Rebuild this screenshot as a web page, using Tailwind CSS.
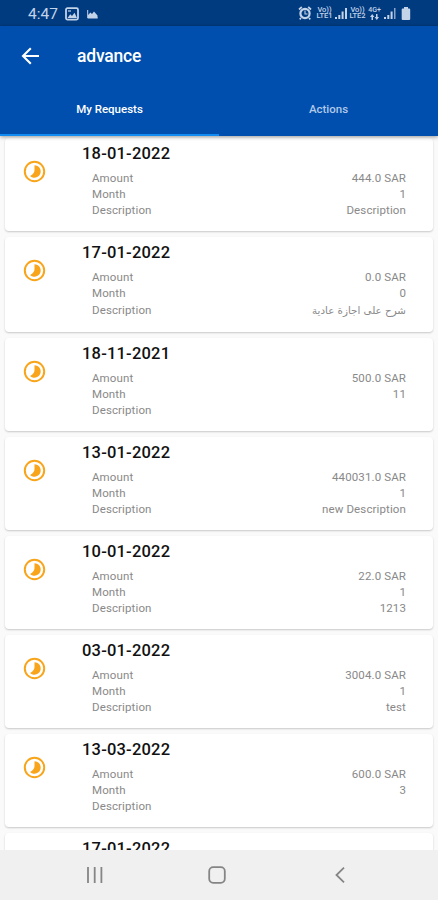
<!DOCTYPE html>
<html lang="en">
<head>
<meta charset="utf-8">
<title>advance</title>
<script src="https://cdn.jsdelivr.net/npm/@tailwindcss/browser@4"></script>
</head>
<body class="w-[438px] h-[900px] overflow-hidden bg-[#fafafa] font-[Roboto,'Noto_Sans',sans-serif] flex flex-col">
<div class="h-[26px] shrink-0 bg-[#003b80] text-[#c3d3e8] flex items-center pl-[28px] pr-[27px]">
  <span class="text-[15.5px] leading-[26px] w-[37px] pt-[2px]">4:47</span>
  <svg class="mt-px" width="14" height="14" viewBox="0 0 14 14"><rect x="1" y="1.2" width="12" height="11.4" rx="1.5" fill="none" stroke="currentColor" stroke-width="1.8"/><path d="M2.500 11 5.300 7.200 7 9 9.500 5.700 12 11z" fill="currentColor"/><path d="M3 3h3v2H3z" fill="currentColor" opacity=".6"/></svg>
  <svg class="ml-[8px] mt-px" width="11" height="10" viewBox="0 0 11 10"><path d="M.7 1v8h10" stroke="currentColor" stroke-width="1" fill="none"/><path d="M1 9V6L3.500 3.500 5 5 7 2.500 10.500 6.500V9z" fill="currentColor"/></svg>
  <div class="ml-auto flex items-center">
    <svg class="mr-[4px]" width="14" height="14" viewBox="0 0 14 14" fill="none" stroke="currentColor"><circle cx="7" cy="7.500" r="4.600" stroke-width="2.200"/><path d="M1 3.500 3.800 1M13 3.500 10.200 1M3 12l-1.300 1.300M11 12l1.300 1.300" stroke-width="1.700"/><path d="M7 4.500V8h2.500" stroke-width="1.100"/></svg>
    <span class="w-[17px] text-[7.5px] leading-[6.5px] font-medium text-center whitespace-nowrap">Vo))<br>LTE1</span>
    <svg class="ml-[2px]" width="13" height="13" viewBox="0 0 13 13" fill="currentColor"><path d="M0 10h2v2H0zM3.300 8h2v4h-2zM6.600 4.500h2V12h-2zM10 1h2v11h-2z"/></svg>
    <span class="ml-[1px] w-[17px] text-[7.5px] leading-[6.5px] font-medium text-center whitespace-nowrap">Vo))<br>LTE2</span>
    <div class="ml-[2px] w-[13px] flex flex-col items-center">
      <span class="text-[7px] leading-[7px] font-medium">4G+</span>
      <svg width="9" height="6" viewBox="0 0 9 6" fill="currentColor"><path d="M0 3 2.200 0 4.400 3H3v3H1.500V3zM4.600 3H6V0h1.500v3H9L6.800 6z"/></svg>
    </div>
    <svg class="ml-[3px]" width="13" height="13" viewBox="0 0 13 13" fill="currentColor"><path d="M0 10h2v2H0zM3.300 8h2v4h-2z"/><path d="M6.600 4.500h2V12h-2z"/><path d="M10 1h1.500v11H10z" opacity=".7"/></svg>
    <svg class="ml-[4px]" width="10" height="13" viewBox="0 0 10 13" fill="currentColor"><path d="M3 0h4v1.500h1.200q1 0 1 1V12q0 1-1 1H1.700q-1 0-1-1V2.500q0-1 1-1H3z"/></svg>
  </div>
</div>
<header class="relative z-10 h-[110px] shrink-0 bg-[#004fae] text-white shadow-[0_1px_4px_rgba(0,0,0,0.4)] flex flex-col">
  <div class="h-[60px] flex items-center pl-[21px]">
    <svg width="19" height="18" viewBox="0 0 19 18" fill="none" stroke="currentColor" stroke-width="2.100"><path d="M18 9H2M9.800 1.200 2 9l7.800 7.800"/></svg>
    <h1 class="ml-[37px] text-[17.5px] font-medium leading-[24px] tracking-[-0.2px]">advance</h1>
  </div>
  <nav class="flex-1 flex text-[11.5px] font-medium text-center">
    <div class="w-[219px] border-b-[2px] border-[#128cf0] leading-[49px]">My Requests</div>
    <div class="w-[219px] leading-[49px] text-[#b0c9e8]">Actions</div>
  </nav>
</header>
<main id="list" class="flex-1 min-h-0 overflow-hidden pt-[2px] px-[5px] flex flex-col gap-[6px]"></main>
<footer class="relative z-10 h-[50px] shrink-0 bg-[#f0f0f0] text-[#858585] flex items-center">
  <svg class="ml-[86px]" width="18" height="16" viewBox="0 0 18 16" stroke="currentColor" stroke-width="1.800"><path d="M2 0v16M8.700 0v16M15.400 0v16"/></svg>
  <svg class="ml-[104px]" width="18" height="18" viewBox="0 0 18 18" fill="none" stroke="currentColor" stroke-width="1.800"><rect x="1.200" y="1.200" width="15.600" height="15.600" rx="4"/></svg>
  <svg class="ml-[109px]" width="10" height="16" viewBox="0 0 10 16" fill="none" stroke="currentColor" stroke-width="1.800"><path d="M9 .700 1.500 8 9 15.300"/></svg>
</footer>
<script>
const requests = [
  ["18-01-2022", "444.0 SAR", "1", "Description"],
  ["17-01-2022", "0.0 SAR", "0", "شرح على اجازة عادية"],
  ["18-11-2021", "500.0 SAR", "11", ""],
  ["13-01-2022", "440031.0 SAR", "1", "new Description"],
  ["10-01-2022", "22.0 SAR", "1", "1213"],
  ["03-01-2022", "3004.0 SAR", "1", "test"],
  ["13-03-2022", "600.0 SAR", "3", ""],
  ["17-01-2022"]
];
const row = (label, value, size) => `<div class="flex justify-between items-center ${size}"><span>${label}</span><span>${value}</span></div>`;
document.getElementById("list").innerHTML = requests.map(([date, amount, month, text]) => {
  const arabic = /[\u0600-\u06ff]/.test(text || "");
  const value = arabic ? `<bdi dir="rtl" class="font-['DejaVu_Sans'] text-[10.3px] tracking-normal">${text}</bdi>` : text;
  const details = amount ? `<div class="mt-[7px] pl-[10px] text-[11.5px] tracking-[0.12px] text-[#898989]">
        ${row("Amount", amount, "h-[16px]")}${row("Month", month, "h-[16px]")}${row("Description", value, arabic ? "h-[18px]" : "h-[16px]")}
      </div>` : "";
  const icon = amount ? `<svg class="mt-[21.5px] shrink-0" width="23" height="23" viewBox="0 0 23 23"><circle cx="11.500" cy="11.500" r="9.700" fill="none" stroke="#f8a51b" stroke-width="2"/><path d="M11.500 5.300A6.200 6.200 0 1 1 7.100 15.900Q11.500 13.500 11.500 10z" fill="#f8a51b"/></svg>` : "";
  return `<article class="${arabic ? "h-[95px]" : "h-[93px]"} shrink-0 bg-white rounded-[4px] shadow-[0_1px_2px_rgba(0,0,0,0.2)] flex">
    <div class="ml-[18px] w-[23px]">${icon}</div>
    <div class="ml-[36px] mr-[27px] flex-1">
      <h2 class="text-[16.5px] leading-[20px] mt-[6px] font-medium tracking-[0.2px] text-[#111]">${date}</h2>
      ${details}
    </div>
  </article>`;
}).join("");
</script>
</body>
</html>
